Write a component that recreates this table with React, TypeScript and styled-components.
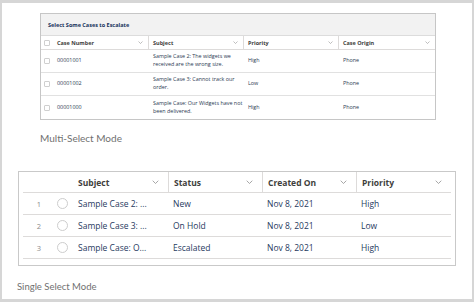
import styled, { createGlobalStyle } from 'styled-components';

const GlobalStyle = createGlobalStyle`
  html, body {
    margin: 0;
    padding: 0;
    background: #ffffff;
  }
`;

const Frame = styled.div`
  width: 474px;
  height: 302px;
  box-sizing: border-box;
  border-style: solid;
  border-color: #d6d6d6;
  border-width: 3px 2px 3px 2px;
  background: #ffffff;
  display: flex;
  flex-direction: column;
  font-family: 'Open Sans', 'Liberation Sans', sans-serif;
`;

const Caption = styled.div<{ $size: number; $top: number; $left: number }>`
  margin: ${(p) => p.$top}px 0 0 ${(p) => p.$left}px;
  font-family: Lato, 'Open Sans', sans-serif;
  font-size: ${(p) => p.$size}px;
  line-height: 12px;
  color: #707070;
`;

/* ---------- multi-select table ---------- */

const MultiCard = styled.div`
  margin: 10px 0 0 38px;
  width: 396px;
  box-sizing: border-box;
  border: 1px solid #c6c6c6;
  background: #ffffff;
`;

const MultiTitle = styled.div`
  height: 21px;
  display: flex;
  align-items: center;
  padding-left: 7px;
  background: #f2f2f2;
  border-bottom: 1px solid #dcdcdc;
  font-size: 5.5px;
  font-weight: 700;
  color: #16325c;
`;

const multiCols = '11px 96px 95px 95px 1fr';

const MultiHead = styled.div`
  display: grid;
  grid-template-columns: ${multiCols};
  height: 13px;
  border-bottom: 1px solid #dddbda;
`;

const MultiHeadCell = styled.div<{ $divider?: boolean }>`
  display: flex;
  align-items: center;
  justify-content: space-between;
  padding: 0 5px 0 ${(p) => (p.$divider ? 4 : 5)}px;
  border-left: ${(p) => (p.$divider ? '1px solid #dddbda' : 'none')};
  font-size: 5.5px;
  font-weight: 700;
  color: #3e3e3c;
`;

const MultiRow = styled.div<{ $last?: boolean }>`
  display: grid;
  grid-template-columns: ${multiCols};
  height: 23px;
  box-sizing: border-box;
  border-bottom: ${(p) => (p.$last ? 'none' : '1px solid #e1e1e1')};
`;

const MultiCell = styled.div`
  display: flex;
  align-items: center;
  padding: 0 0 0 5px;
  font-size: 5.4px;
  line-height: 7.6px;
  color: #2b3a52;
`;

const CheckCell = styled.div`
  display: flex;
  align-items: center;
  padding-left: 3px;
`;

const Checkbox = styled.span`
  width: 6px;
  height: 6px;
  box-sizing: border-box;
  border: 1px solid #cfcfcf;
  border-radius: 1px;
  background: #ffffff;
`;

/* ---------- single-select table ---------- */

const SingleCard = styled.div`
  margin: 27px 0 0 16px;
  width: 438px;
  box-sizing: border-box;
  border: 1px solid #c9c9c9;
  padding: 0 4px 6px;
  background: #ffffff;
`;

const singleCols = '27px 24px 94px 94px 94px 1fr';

const SingleHead = styled.div`
  display: grid;
  grid-template-columns: ${singleCols};
  height: 21px;
  box-sizing: border-box;
  border-bottom: 1px solid #dddbda;
`;

const SingleHeadCell = styled.div<{ $divider?: boolean }>`
  display: flex;
  align-items: center;
  justify-content: space-between;
  padding: 0 9px 0 ${(p) => (p.$divider ? 5 : 4)}px;
  border-left: ${(p) => (p.$divider ? '1px solid #dddbda' : 'none')};
  font-size: 8.5px;
  font-weight: 700;
  color: #3e3e3c;
`;

const SingleRow = styled.div`
  display: grid;
  grid-template-columns: ${singleCols};
  height: 22px;
  box-sizing: border-box;
  border-bottom: 1px solid #dddbda;
`;

const NumCell = styled.div`
  display: flex;
  align-items: center;
  justify-content: flex-end;
  padding-right: 9px;
  font-size: 7.5px;
  color: #8a8a8a;
`;

const RadioCell = styled.div`
  display: flex;
  align-items: center;
  padding-left: 7px;
`;

const Radio = styled.span`
  width: 11px;
  height: 11px;
  box-sizing: border-box;
  border: 1px solid #cdcdcd;
  border-radius: 50%;
  background: #ffffff;
`;

const SingleCell = styled.div<{ $pad?: number }>`
  display: flex;
  align-items: center;
  padding-left: ${(p) => p.$pad ?? 5}px;
  font-size: 8.5px;
  color: #1f3a60;
  white-space: nowrap;
`;

const Chevron = ({ size }: { size: number }) => (
  <svg width={size} height={size * 0.6} viewBox="0 0 10 6" fill="none">
    <polyline points="1,1 5,5 9,1" stroke="#8a8a8a" strokeWidth="1.1" />
  </svg>
);

const multiRows = [
  { num: '00001001', subject: 'Sample Case 2: The widgets we received are the wrong size.', priority: 'High', origin: 'Phone' },
  { num: '00001002', subject: 'Sample Case 3: Cannot track our order.', priority: 'Low', origin: 'Phone' },
  { num: '00001000', subject: 'Sample Case: Our Widgets have not been delivered.', priority: 'High', origin: 'Phone' },
];

const singleRows = [
  { subject: 'Sample Case 2: ...', status: 'New', created: 'Nov 8, 2021', priority: 'High' },
  { subject: 'Sample Case 3: ...', status: 'On Hold', created: 'Nov 8, 2021', priority: 'Low' },
  { subject: 'Sample Case: O...', status: 'Escalated', created: 'Nov 8, 2021', priority: 'High' },
];

export default function App() {
  return (
    <>
      <GlobalStyle />
      <Frame>
        <MultiCard>
          <MultiTitle>Select Some Cases to Escalate</MultiTitle>
          <MultiHead>
            <CheckCell>
              <Checkbox />
            </CheckCell>
            <MultiHeadCell>
              Case Number <Chevron size={5} />
            </MultiHeadCell>
            <MultiHeadCell $divider>
              Subject <Chevron size={5} />
            </MultiHeadCell>
            <MultiHeadCell $divider>
              Priority <Chevron size={5} />
            </MultiHeadCell>
            <MultiHeadCell $divider>
              Case Origin <Chevron size={5} />
            </MultiHeadCell>
          </MultiHead>
          {multiRows.map((r, i) => (
            <MultiRow key={r.num} $last={i === multiRows.length - 1}>
              <CheckCell>
                <Checkbox />
              </CheckCell>
              <MultiCell>{r.num}</MultiCell>
              <MultiCell>{r.subject}</MultiCell>
              <MultiCell>{r.priority}</MultiCell>
              <MultiCell>{r.origin}</MultiCell>
            </MultiRow>
          ))}
        </MultiCard>
        <Caption $size={10} $top={12} $left={38}>
          Multi-Select Mode
        </Caption>

        <SingleCard>
          <SingleHead>
            <div />
            <div />
            <SingleHeadCell>
              Subject <Chevron size={7} />
            </SingleHeadCell>
            <SingleHeadCell $divider>
              Status <Chevron size={7} />
            </SingleHeadCell>
            <SingleHeadCell $divider>
              Created On <Chevron size={7} />
            </SingleHeadCell>
            <SingleHeadCell $divider>
              Priority <Chevron size={7} />
            </SingleHeadCell>
          </SingleHead>
          {singleRows.map((r, i) => (
            <SingleRow key={r.subject}>
              <NumCell>{i + 1}</NumCell>
              <RadioCell>
                <Radio />
              </RadioCell>
              <SingleCell $pad={4}>{r.subject}</SingleCell>
              <SingleCell>{r.status}</SingleCell>
              <SingleCell>{r.created}</SingleCell>
              <SingleCell>{r.priority}</SingleCell>
            </SingleRow>
          ))}
        </SingleCard>
        <Caption $size={9.5} $top={15} $left={15}>
          Single Select Mode
        </Caption>
      </Frame>
    </>
  );
}
